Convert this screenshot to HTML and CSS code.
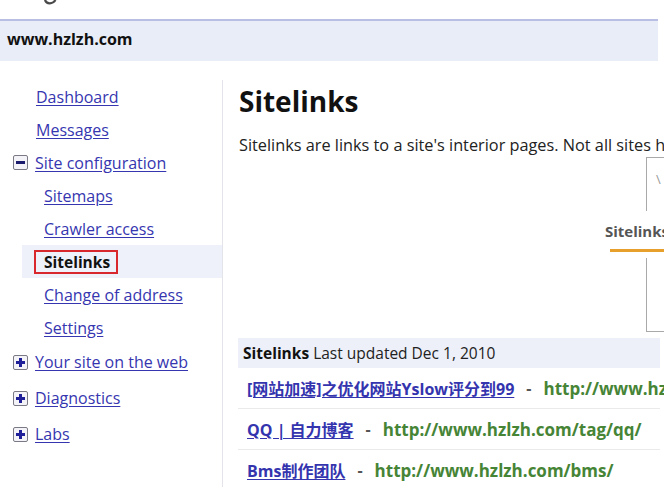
FILE: index.html
```html
<!DOCTYPE html>
<html lang="en">
<head>
<meta charset="utf-8">
<title>Sitelinks - www.hzlzh.com</title>
<link rel="stylesheet" href="styles.css">
</head>
<body>
<div class="page">
  <div class="logo-strip">
    <svg class="logo-g" width="13" height="6" viewBox="0 0 13 6"><path d="M1 0 C2.5 4.2 8.5 4.6 11.5 0" fill="none" stroke="#4a4a4a" stroke-width="2.2"/></svg>
  </div>
  <div class="sitebar">www.hzlzh.com</div>
  <div class="layout">
    <nav class="sidebar">
      <ul class="nav">
        <li class="item"><a href="#">Dashboard</a></li>
        <li class="item"><a href="#">Messages</a></li>
        <li class="item"><span class="toggle minus"></span><a href="#">Site configuration</a></li>
        <li class="item sub"><a href="#">Sitemaps</a></li>
        <li class="item sub"><a href="#">Crawler access</a></li>
        <li class="item sub active"><span class="current">Sitelinks</span></li>
        <li class="item sub"><a href="#">Change of address</a></li>
        <li class="item sub"><a href="#">Settings</a></li>
        <li class="item tall"><span class="toggle plus"></span><a href="#">Your site on the web</a></li>
        <li class="item tall"><span class="toggle plus"></span><a href="#">Diagnostics</a></li>
        <li class="item tall"><span class="toggle plus"></span><a href="#">Labs</a></li>
      </ul>
    </nav>
    <main class="main">
      <h1 class="title">Sitelinks</h1>
      <p class="intro">Sitelinks are links to a site's interior pages. Not all sites have sitelinks.</p>
      <div class="figure">
        <div class="seg seg-top"><span class="ghost">\</span></div>
        <div class="fig-label">Sitelinks</div>
        <div class="fig-bar"></div>
        <div class="seg seg-bottom"></div>
      </div>
      <div class="table">
        <div class="thead"><b>Sitelinks</b> Last updated Dec 1, 2010</div>
        <div class="row"><a href="#">[网站加速]之优化网站Yslow评分到99</a><span class="dash">-</span><span class="url">http://www.hzlzh.com/yslow-99/</span></div>
        <div class="row"><a href="#">QQ | 自力博客</a><span class="dash">-</span><span class="url">http://www.hzlzh.com/tag/qq/</span></div>
        <div class="row"><a href="#">Bms制作团队</a><span class="dash">-</span><span class="url">http://www.hzlzh.com/bms/</span></div>
      </div>
    </main>
  </div>
</div>
</body>
</html>
```
FILE: styles.css
```css
html, body {
  margin: 0;
  padding: 0;
  background: #ffffff;
}
body {
  font-family: "Open Sans", "Noto Sans CJK SC", sans-serif;
  color: #111;
  width: 664px;
  height: 487px;
  overflow: hidden;
}
.page {
  width: 664px;
  height: 487px;
  overflow: hidden;
}
.logo-strip {
  height: 19px;
}
.logo-g {
  display: block;
  margin-left: 44px;
}
.sitebar {
  border-top: 2px solid #b9bfe4;
  background: #e9edf8;
  height: 40px;
  line-height: 37px;
  margin-right: 6px;
  padding-left: 7px;
  font-weight: 700;
  font-size: 16px;
  color: #111;
}
.layout {
  display: flex;
  align-items: stretch;
  height: 426px;
}
.sidebar {
  width: 222px;
  flex: none;
  border-right: 1px solid #e2e4ea;
  margin-top: 19px;
}
.nav {
  list-style: none;
  margin: 0;
  padding: 0;
}
.item {
  height: 33px;
  display: flex;
  align-items: center;
  padding-left: 36px;
  font-size: 16px;
}
.item.sub {
  padding-left: 44px;
}
.item.tall {
  height: 36px;
}
.item a {
  color: #3636b0;
  text-decoration: underline;
  text-underline-offset: 2px;
}
.toggle {
  width: 13px;
  height: 13px;
  border: 1.5px solid #7a7a86;
  border-radius: 2px;
  background: #f4f4f8;
  margin-left: -23px;
  margin-right: 7px;
  position: relative;
  flex: none;
}
.toggle.minus::after {
  content: "";
  position: absolute;
  left: 2px;
  right: 2px;
  top: 5px;
  height: 3px;
  background: #1c1c6e;
}
.toggle.plus::before,
.toggle.plus::after {
  content: "";
  position: absolute;
  background: #1f1f9a;
}
.toggle.plus::before {
  left: 2px;
  right: 2px;
  top: 5px;
  height: 3px;
}
.toggle.plus::after {
  top: 2px;
  bottom: 2px;
  left: 5px;
  width: 3px;
}
.item.active {
  background: #eef0fa;
  margin-left: 22px;
  padding-left: 12px;
}
.current {
  font-weight: 700;
  font-size: 15.5px;
  color: #111;
  border: 2px solid #d9272e;
  padding: 1px 6px 1px 8px;
  line-height: 18px;
}
.main {
  flex: 1;
  min-width: 0;
  padding-left: 16px;
  overflow: hidden;
}
.title {
  margin: 22px 0 0 0;
  font-size: 28px;
  line-height: 36px;
  font-weight: 700;
  color: #111;
}
.intro {
  margin: 16px 0 0 0;
  font-size: 16.3px;
  line-height: 20px;
  white-space: nowrap;
  color: #222;
}
.figure {
  margin: 2px 0 0 366px;
  height: 176px;
  width: 80px;
  display: flex;
  flex-direction: column;
}
.seg {
  margin-left: 41px;
  border-left: 1.5px solid #a9a9a9;
  width: 30px;
}
.seg-top {
  height: 54px;
  border-top: 1.5px solid #a9a9a9;
  color: #9a9a9a;
  font-size: 13px;
  padding: 12px 0 0 9px;
  box-sizing: border-box;
}
.fig-label {
  margin-top: 10px;
  font-weight: 700;
  font-size: 15px;
  line-height: 20px;
  color: #555;
  white-space: nowrap;
}
.fig-bar {
  margin: 8px 0 0 5px;
  height: 3px;
  width: 70px;
  background: #e8a02c;
}
.seg-bottom {
  margin-top: 6px;
  height: 73px;
  border-bottom: 1.5px solid #a9a9a9;
}
.table {
  margin: 5px 4px 0 -1px;
}
.thead {
  background: #edf0f8;
  height: 30px;
  line-height: 30px;
  padding-left: 5px;
  font-size: 15.5px;
  color: #222;
  white-space: nowrap;
}
.thead b {
  color: #111;
}
.row {
  display: flex;
  align-items: center;
  white-space: nowrap;
  padding-left: 9px;
  font-weight: 700;
  font-size: 16px;
  height: 40px;
  border-bottom: 1px solid #eaeaea;
}
.row:first-of-type {
  height: 44px;
}
.row a {
  color: #3434ae;
  text-decoration: underline;
  text-underline-offset: 2px;
}
.dash {
  color: #555;
  margin: 0 12px;
}
.url {
  color: #468436;
  font-size: 17px;
}
```
